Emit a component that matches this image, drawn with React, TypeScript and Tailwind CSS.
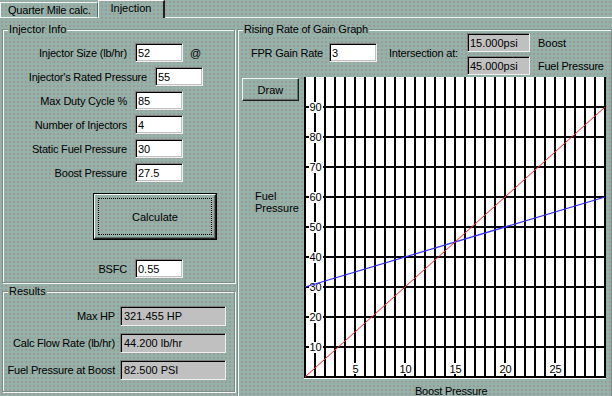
import React from "react";

const BG =
  "bg-[#93b3aa] bg-[image:radial-gradient(circle,#a58a88_0.55px,transparent_0.95px)] bg-[length:4px_4px]";
const ETCH =
  "border border-[#7f8f8b] shadow-[inset_1px_1px_0_#f4f4f4,1px_1px_0_#f4f4f4]";
const FIELD =
  "border border-t-[#808080] border-l-[#808080] border-r-[#f0f0f0] border-b-[#f0f0f0] shadow-[inset_1px_1px_0_#000,inset_-1px_-1px_0_#c0c0c0]";

function Field({ value, cls }: { value: string; cls: string }) {
  return (
    <div className={`${FIELD} ${cls} flex items-center pl-[2px] whitespace-nowrap`}>
      {value}
    </div>
  );
}

function InRow({
  label,
  value,
  labelW,
  extra,
}: {
  label: string;
  value: string;
  labelW: string;
  extra?: string;
}) {
  return (
    <div className="flex items-center h-[19px]">
      <span className={`${labelW} text-right pr-[8px] whitespace-nowrap tracking-[-0.2px]`}>{label}</span>
      <Field value={value} cls="bg-white w-[48px] h-[19px]" />
      {extra && <span className="ml-[7px]">{extra}</span>}
    </div>
  );
}

function OutRow({ label, value }: { label: string; value: string }) {
  return (
    <div className="flex items-center h-[20px]">
      <span className="w-[117px] text-right pr-[5px] whitespace-nowrap tracking-[-0.2px]">{label}</span>
      <Field value={value} cls="bg-[#c0c0c0] w-[106px] h-[20px] pl-[3px]" />
    </div>
  );
}

function Graph() {
  const vlines = Array.from({ length: 31 }, (_, k) => 1 + 10 * k);
  const hlines = Array.from({ length: 10 }, (_, j) => 300 - 30 * j);
  const ylabels = [10, 20, 30, 40, 50, 60, 70, 80, 90];
  const xlabels = [5, 10, 15, 20, 25];
  return (
    <svg width="302" height="302" viewBox="0 0 302 302" className="block bg-white">
      <g stroke="#000" strokeWidth="2" shapeRendering="crispEdges">
        {vlines.map((x) => (
          <line key={"v" + x} x1={x} y1={0} x2={x} y2={301} />
        ))}
        {hlines.map((y) => (
          <line key={"h" + y} x1={0} y1={y} x2={302} y2={y} />
        ))}
      </g>
      {ylabels.map((v) => {
        const y = 300 - 3 * v;
        return (
          <g key={"y" + v}>
            <rect x={5} y={y - 5} width={14} height={11} fill="#fff" />
            <text
              x={11.5}
              y={y + 4}
              textAnchor="middle"
              fontFamily="'Liberation Sans', Arial, sans-serif"
              fontSize="11"
              fill="#000"
            >
              {v}
            </text>
          </g>
        );
      })}
      {xlabels.map((v) => {
        const x = 1 + 10 * v;
        const w = v < 10 ? 9 : 15;
        return (
          <g key={"x" + v}>
            <rect x={x - w / 2} y={286} width={w} height={11} fill="#fff" />
            <text
              x={x + 0.5}
              y={296}
              textAnchor="middle"
              fontFamily="'Liberation Sans', Arial, sans-serif"
              fontSize="11"
              fill="#000"
            >
              {v}
            </text>
          </g>
        );
      })}
      <line x1={1} y1={210} x2={301} y2={120} stroke="#3030ff" strokeWidth="1.2" />
      <line x1={1} y1={300} x2={301} y2={30} stroke="#ff2020" strokeWidth="1" />
    </svg>
  );
}

export default function App() {
  return (
    <div
      className={`${BG} relative w-[612px] h-[396px] overflow-hidden text-[11px] leading-[12px] text-black font-['Liberation_Sans',Arial,sans-serif]`}
    >
      {/* Tabs */}
      <div className="flex h-[18px]">
        <div className="w-[98px] h-[16px] mt-[2px] border-t border-l border-b border-t-[#f4f4f4] border-l-[#f4f4f4] border-b-[#f4f4f4] border-r border-r-[#5a6a66] flex items-center pl-[7px] whitespace-nowrap tracking-[-0.2px]">
          Quarter Mile calc.
        </div>
        <div className="w-[67px] h-[18px] border-t border-l border-t-[#f4f4f4] border-l-[#f4f4f4] border-r-2 border-r-[#202020] flex items-center justify-center pb-[3px]">
          Injection
        </div>
        <div className="flex-1 border-b border-b-[#f4f4f4]" />
      </div>

      <div className="flex">
        {/* Left column */}
        <div className="w-[238px] pl-[2px] pt-[11px] flex flex-col">
          <div className={`${ETCH} relative h-[254px] flex flex-col pt-[13px] gap-[5px]`}>
            <span className={`${BG} absolute -top-[7px] left-[5px] px-[1px]`}>Injector Info</span>
            <InRow label="Injector Size (lb/hr)" value="52" labelW="w-[132px]" extra="@" />
            <InRow label="Injector's Rated Pressure" value="55" labelW="w-[152px]" />
            <InRow label="Max Duty Cycle %" value="85" labelW="w-[132px]" />
            <InRow label="Number of Injectors" value="4" labelW="w-[132px]" />
            <InRow label="Static Fuel Pressure" value="30" labelW="w-[132px]" />
            <InRow label="Boost Pressure" value="27.5" labelW="w-[132px]" />
            <div className="mt-[6px] ml-[90px] w-[124px] h-[47px] border border-black p-0">
              <div className="w-full h-full border border-t-[#f4f4f4] border-l-[#f4f4f4] border-r-[#202020] border-b-[#202020] shadow-[inset_-1px_-1px_0_#5f6f6b] p-[3px]">
                <div className="w-full h-full border border-dotted border-black flex items-center justify-center">
                  Calculate
                </div>
              </div>
            </div>
            <div className="mt-[14px]">
              <InRow label="BSFC" value="0.55" labelW="w-[132px]" />
            </div>
          </div>

          <div className={`${ETCH} relative mt-[8px] h-[101px] flex flex-col pt-[14px] gap-[7px]`}>
            <span className={`${BG} absolute -top-[7px] left-[5px] px-[1px]`}>Results</span>
            <OutRow label="Max HP" value="321.455 HP" />
            <OutRow label="Calc Flow Rate (lb/hr)" value="44.200 lb/hr" />
            <OutRow label="Fuel Pressure at Boost" value="82.500 PSI" />
          </div>
        </div>

        {/* Right group */}
        <div className={`${ETCH} relative ml-[2px] mt-[11px] w-[380px] h-[400px] flex flex-col`}>
          <span className={`${BG} absolute -top-[7px] left-[5px] px-[1px] whitespace-nowrap tracking-[-0.2px]`}>
            Rising Rate of Gain Graph
          </span>
          <div className="flex pt-[3px] pl-[13px]">
            <div className="flex items-center h-[19px] mt-[10px]">
              <span className="w-[78px] whitespace-nowrap tracking-[-0.2px]">FPR Gain Rate</span>
              <Field value="3" cls="bg-white w-[48px] h-[19px]" />
              <span className="ml-[12px] w-[78px] whitespace-nowrap tracking-[-0.2px]">Intersection at:</span>
            </div>
            <div className="flex flex-col gap-[4px]">
              <Field value="15.000psi" cls="bg-[#c0c0c0] w-[63px] h-[19px]" />
              <Field value="45.000psi" cls="bg-[#c0c0c0] w-[63px] h-[19px]" />
            </div>
            <div className="flex flex-col gap-[4px] ml-[8px]">
              <div className="h-[19px] flex items-center">Boost</div>
              <div className="h-[19px] flex items-center whitespace-nowrap tracking-[-0.2px]">Fuel Pressure</div>
            </div>
          </div>
          <div className="flex">
            <div className="w-[66px] flex flex-col">
              <div className="mt-[3px] ml-[4px] w-[57px] h-[23px] border border-t-[#f4f4f4] border-l-[#f4f4f4] border-r-[#202020] border-b-[#202020] shadow-[inset_-1px_-1px_0_#5f6f6b] flex items-center justify-center">
                Draw
              </div>
              <div className="mt-[89px] ml-[17px]">
                <div>Fuel</div>
                <div>Pressure</div>
              </div>
            </div>
            <div className="flex flex-col">
              <div className="mt-[2px]">
                <Graph />
              </div>
              <div className="ml-[111px] mt-[6px] whitespace-nowrap tracking-[-0.2px]">Boost Pressure</div>
            </div>
          </div>
        </div>
      </div>
    </div>
  );
}
